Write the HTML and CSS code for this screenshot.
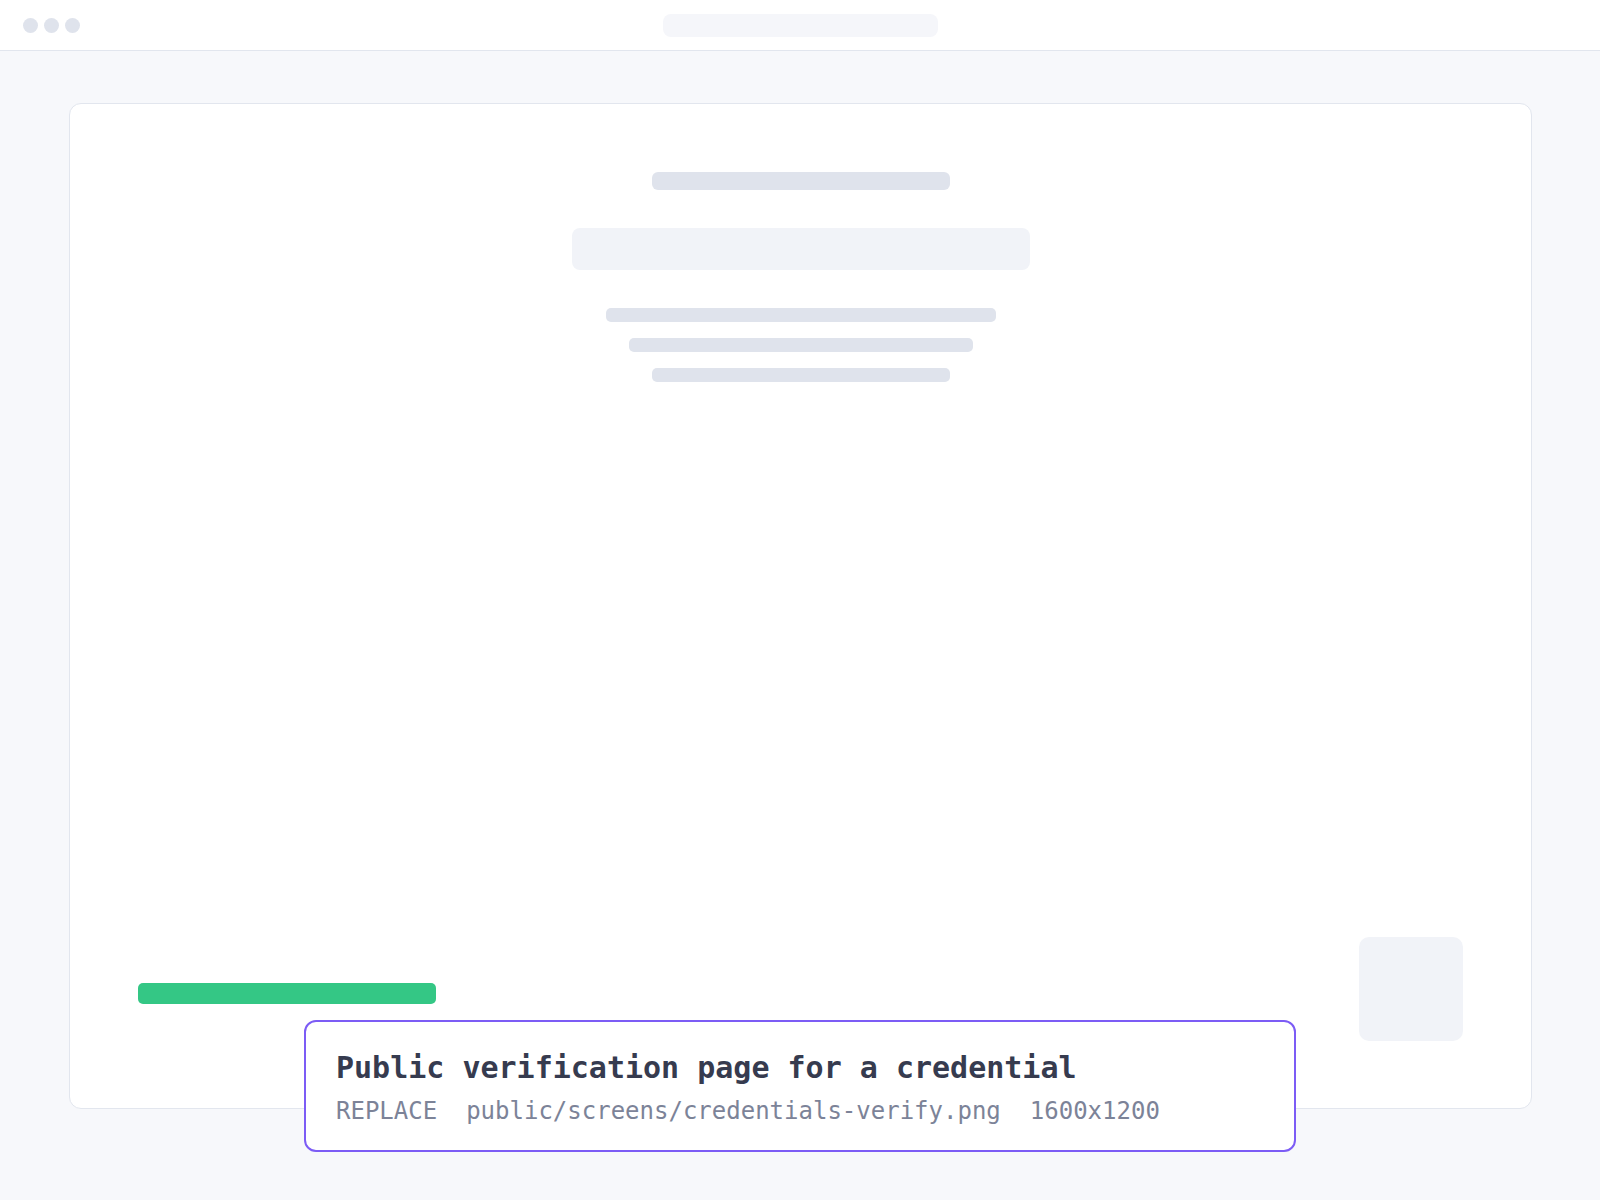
FILE: index.html
```html
<!DOCTYPE html>
<html>

<head>
  <link rel="stylesheet" href="styles.css">
</head>

<body>
  <div class="topbar">
    <div class="dots">
      <span class="dot"></span>
      <span class="dot"></span>
      <span class="dot"></span>
    </div>
    <div class="address"></div>
    <div></div>
  </div>

  <div class="main">
    <div class="card">
      <div class="hero">
        <div class="bar bar-title"></div>
        <div class="bar bar-box"></div>
        <div class="lines">
          <div class="bar line line-1"></div>
          <div class="bar line line-2"></div>
          <div class="bar line line-3"></div>
        </div>
      </div>

      <div class="footer-row">
        <div class="progress"></div>
        <div class="thumb"></div>
      </div>
    </div>
  </div>

  <div class="caption">
    <div class="caption-title">Public verification page for a credential</div>
    <div class="caption-meta">
      <span>REPLACE</span>
      <span>public/screens/credentials-verify.png</span>
      <span>1600x1200</span>
    </div>
  </div>
</body>

</html>
```

FILE: styles.css
```css
body {
  margin: 0;
  padding: 0;
  background-color: #f7f8fb;
  font-family: "DejaVu Sans Mono", "Liberation Mono", monospace;
}

.topbar {
  height: 50px;
  background-color: #fff;
  border-bottom: 1px solid #e2e6ee;
  display: grid;
  grid-template-columns: 1fr auto 1fr;
  align-items: center;
  padding: 0 23px;
}

.dots {
  display: flex;
  gap: 6px;
}

.dot {
  width: 15px;
  height: 15px;
  border-radius: 50%;
  background-color: #dfe3ec;
}

.address {
  width: 275px;
  height: 23px;
  border-radius: 8px;
  background-color: #f5f6fa;
}

.main {
  padding: 52px 68px 91px 69px;
}

.card {
  height: 1006px;
  box-sizing: border-box;
  background-color: #fff;
  border: 1px solid #e2e6ee;
  border-radius: 12px;
  padding: 68px 68px 67px;
  display: flex;
  flex-direction: column;
  justify-content: space-between;
}

.hero {
  display: flex;
  flex-direction: column;
  align-items: center;
}

.bar {
  background-color: #dfe3ec;
  border-radius: 5px;
}

.bar-title {
  width: 298px;
  height: 18px;
  border-radius: 6px;
  margin-bottom: 38px;
}

.bar-box {
  width: 458px;
  height: 42px;
  border-radius: 8px;
  background-color: #f1f3f8;
  margin-bottom: 38px;
}

.lines {
  display: flex;
  flex-direction: column;
  align-items: center;
  gap: 16px;
}

.line {
  height: 14px;
}

.line-1 {
  width: 390px;
}

.line-2 {
  width: 344px;
}

.line-3 {
  width: 298px;
}

.footer-row {
  display: flex;
  justify-content: space-between;
  align-items: flex-end;
}

.progress {
  width: 298px;
  height: 21px;
  border-radius: 5px;
  background-color: #34c785;
  margin-bottom: 37px;
}

.thumb {
  width: 104px;
  height: 104px;
  border-radius: 10px;
  background-color: #f1f3f8;
}

.caption {
  position: absolute;
  left: 50%;
  bottom: 48px;
  transform: translateX(-50%);
  width: 992px;
  box-sizing: border-box;
  background-color: #fff;
  border: 2px solid #7c5cf5;
  border-radius: 12px;
  padding: 28px 28px 24px 30px;
}

.caption-title {
  font-size: 30px;
  line-height: 36px;
  font-weight: bold;
  color: #363b4f;
  margin-bottom: 10px;
}

.caption-meta {
  display: flex;
  gap: 29px;
  font-size: 24px;
  line-height: 30px;
  color: #7c8398;
}
```
